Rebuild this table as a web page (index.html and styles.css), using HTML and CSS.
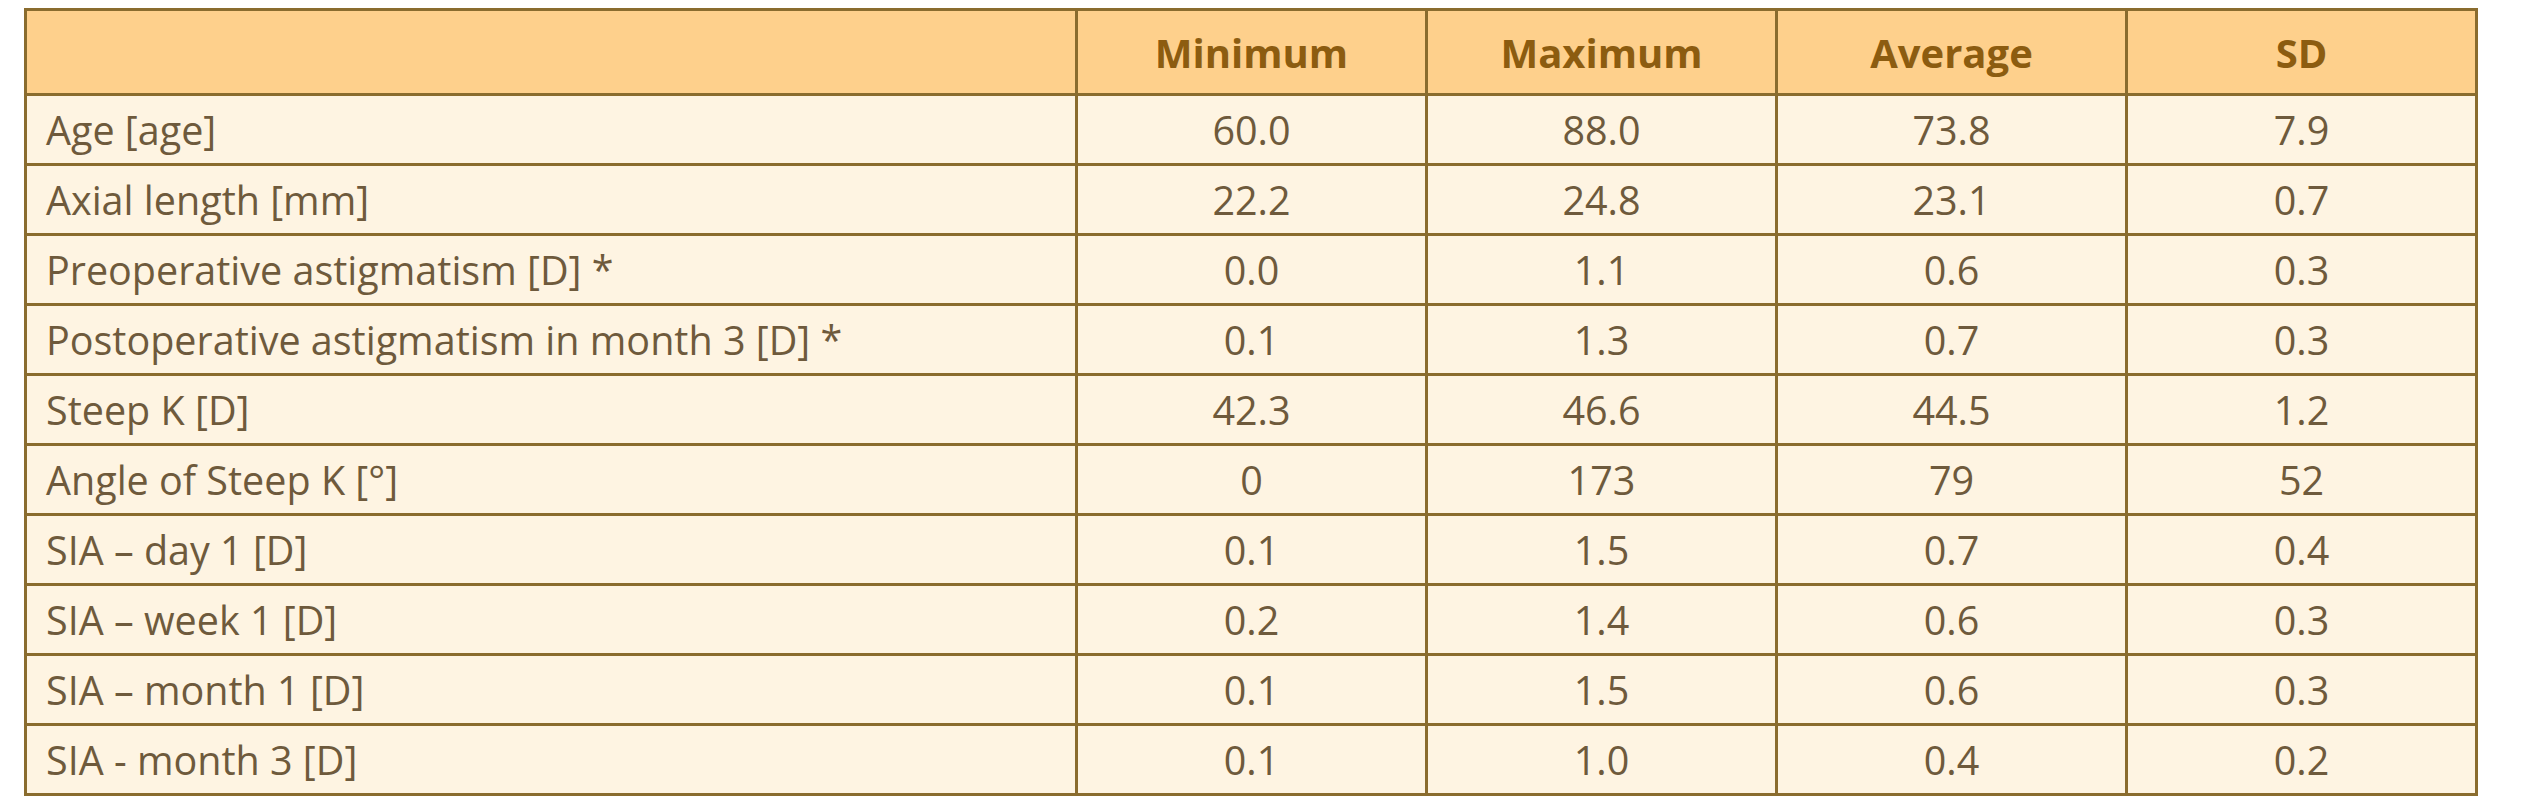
FILE: index.html
```html
<!DOCTYPE html>
<html lang="en">
<head>
<meta charset="utf-8">
<title>Patient characteristics</title>
<link rel="stylesheet" href="styles.css">
</head>
<body>
<table class="stats">
  <colgroup>
    <col class="col-label">
    <col class="col-num">
    <col class="col-num">
    <col class="col-num">
    <col class="col-num">
  </colgroup>
  <thead>
    <tr class="head-row">
      <th class="label-head"></th>
      <th>Minimum</th>
      <th>Maximum</th>
      <th>Average</th>
      <th>SD</th>
    </tr>
  </thead>
  <tbody>
    <tr><td class="label">Age [age]</td><td>60.0</td><td>88.0</td><td>73.8</td><td>7.9</td></tr>
    <tr><td class="label">Axial length [mm]</td><td>22.2</td><td>24.8</td><td>23.1</td><td>0.7</td></tr>
    <tr><td class="label">Preoperative astigmatism [D] *</td><td>0.0</td><td>1.1</td><td>0.6</td><td>0.3</td></tr>
    <tr><td class="label">Postoperative astigmatism in month 3 [D] *</td><td>0.1</td><td>1.3</td><td>0.7</td><td>0.3</td></tr>
    <tr><td class="label">Steep K [D]</td><td>42.3</td><td>46.6</td><td>44.5</td><td>1.2</td></tr>
    <tr><td class="label">Angle of Steep K [°]</td><td>0</td><td>173</td><td>79</td><td>52</td></tr>
    <tr><td class="label">SIA – day 1 [D]</td><td>0.1</td><td>1.5</td><td>0.7</td><td>0.4</td></tr>
    <tr><td class="label">SIA – week 1 [D]</td><td>0.2</td><td>1.4</td><td>0.6</td><td>0.3</td></tr>
    <tr><td class="label">SIA – month 1 [D]</td><td>0.1</td><td>1.5</td><td>0.6</td><td>0.3</td></tr>
    <tr><td class="label">SIA - month 3 [D]</td><td>0.1</td><td>1.0</td><td>0.4</td><td>0.2</td></tr>
  </tbody>
</table>
</body>
</html>
```

FILE: styles.css
```css
html, body {
  margin: 0;
  padding: 0;
  background: #ffffff;
}

body {
  padding: 8px 0 0 24px;
  font-family: "Open Sans", "Noto Sans", "Liberation Sans", sans-serif;
  color: #6e5a3c;
}

.stats {
  border-collapse: collapse;
  table-layout: fixed;
  width: 2451px;
  border: 3px solid #8a6c2e;
}

.col-label { width: 1051px; }
.col-num { width: 350px; }

.stats th,
.stats td {
  border: 3px solid #8a6c2e;
  padding: 0;
  text-align: center;
  vertical-align: middle;
  white-space: nowrap;
}

.head-row th {
  height: 82px;
  background: #fed08c;
  color: #8c5c10;
  font-weight: 700;
  font-size: 40px;
}

.stats tbody td {
  height: 67px;
  background: #fef4e2;
  font-size: 39.5px;
  font-weight: 400;
}

.stats tbody td.label {
  text-align: left;
  padding-left: 19px;
}
```
